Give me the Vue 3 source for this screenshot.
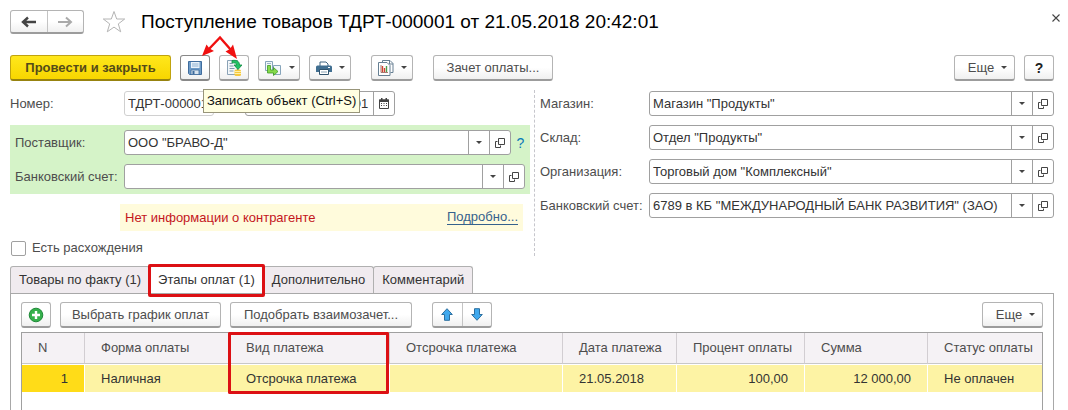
<template>
    <div class="page">
        <div class="title-row">
            <div class="nav">
                <button type="button" aria-label="Назад">
                    <svg width="16" height="12" viewBox="0 0 16 12"><path d="M7 1.500 2 6l5 4.500M2.500 6H15" fill="none" stroke="#444" stroke-width="2.400"/></svg>
                </button>
                <button type="button" aria-label="Вперед">
                    <svg width="16" height="12" viewBox="0 0 16 12"><path d="M9 1.500 14 6 9 10.500M13.500 6H1" fill="none" stroke="#aaa" stroke-width="2"/></svg>
                </button>
            </div>
            <button type="button" class="plain star" aria-label="В избранное">
                <svg width="24" height="24" viewBox="0 0 24 24"><path d="M12 1.500 14.700 9h8L16.300 13.900l2.400 7.900L12 17.100l-6.700 4.700 2.400-7.900L1.300 9h8z" fill="#fff" stroke="#b4b4b4"/></svg>
            </button>
            <h1>Поступление товаров ТДРТ-000001 от 21.05.2018 20:42:01</h1>
            <button type="button" class="plain close" aria-label="Закрыть">
                <svg width="8" height="8" viewBox="0 0 8 8"><path d="M.5.5l7 7M7.500.5l-7 7" stroke="#444" stroke-width="1.100"/></svg>
            </button>
        </div>

        <div class="toolbar main-bar">
            <button type="button" class="btn primary">Провести и закрыть</button>
            <div class="save-wrap">
                <button type="button" class="btn icon active" aria-label="Записать" aria-describedby="save-tip">
                    <svg width="16" height="16" viewBox="0 0 16 16">
                        <path d="M1.500 1.500h13v13h-12l-1-1z" fill="#6d9bc8" stroke="#3f6c9d"/>
                        <path d="M4 2h8.500v6H4z" fill="#e9f2fa"/>
                        <path d="M5 4h6.500M5 6h6.500" stroke="#8fb2d3"/>
                        <path d="M4 10h8v4.500H4z" fill="#d9e4ee" stroke="#3f6c9d" stroke-width=".8"/>
                        <path d="M5.500 11h2v3h-2z" fill="#3f6c9d"/>
                    </svg>
                </button>
                <svg class="arrows" width="44" height="26" viewBox="0 0 44 26">
                    <path d="M10 15 22 2.500 33 15" fill="none" stroke="#f01010" stroke-width="2.400"/>
                    <path d="M4 21 8.500 9.500l3 4 4.500 2.500zM39 24l-11.500-7.500 4.500-2.500 3-4.500z" fill="#f01010"/>
                </svg>
                <div class="tooltip" id="save-tip" role="tooltip">Записать объект (Ctrl+S)</div>
            </div>
            <button type="button" class="btn icon" aria-label="Провести">
                <svg width="16" height="18" viewBox="0 0 16 18">
                    <path d="M1.500 1.500h10v14h-10z" fill="#f3f7fa" stroke="#8aa2b6"/>
                    <path d="M3.500 4.500h3M3.500 7h4M3.500 9.500h5M3.500 12h4" stroke="#7d98ad"/>
                    <rect x="8.500" y="10.500" width="6.500" height="6.500" rx="1.500" fill="#f6c83c"/>
                    <path d="M8.500 12.500H15M8.500 14.500H15" stroke="#fff0a8"/>
                    <path d="M6 1.500c5-.8 7.500 1 7.500 4.500H16l-4 4.500L8 6h2.500c0-1.800-1.500-2.500-4.500-2z" fill="#20c264" stroke="#128a43" stroke-width=".8"/>
                </svg>
            </button>
            <button type="button" class="btn menu" aria-label="Создать на основании">
                <svg width="18" height="16" viewBox="0 0 18 16">
                    <path d="M1.500 1.500h7v9h-7zM9.500 5.500h7v9h-7z" fill="#f2f7fa" stroke="#87a5bb"/>
                    <path d="M3 3.500h4" stroke="#9ab5c8"/>
                    <path d="M3.500 5.500h3v4.500h3V7.500l4.500 4-4.500 4V13h-6z" fill="#86d94b" stroke="#3c9a25" stroke-width=".8"/>
                </svg>
                <i class="caret"></i>
            </button>
            <button type="button" class="btn menu" aria-label="Печать">
                <svg width="16" height="14" viewBox="0 0 16 14">
                    <path d="M4 5V1h6l2 2v2" fill="#fff" stroke="#416480"/>
                    <path d="M1.500 4.500h13Q16 4.500 16 6v5h-3V9H3v2H0V6q0-1.500 1.500-1.500z" fill="#416f91"/>
                    <path d="M3.500 8.500h9v5h-9z" fill="#fff" stroke="#31536d"/>
                    <path d="M5 11h6" stroke="#8ba3b4"/><path d="M12 6.500h2" stroke="#fff"/>
                </svg>
                <i class="caret"></i>
            </button>
            <button type="button" class="btn menu reports" aria-label="Отчеты">
                <svg width="16" height="16" viewBox="0 0 16 16">
                    <path d="M4.500 2.500v-2h7.500l3 3v9h-2.500" fill="#fff" stroke="#667f92"/>
                    <path d="M11.500.5v3.500H15" fill="none" stroke="#667f92"/>
                    <path d="M.5 2.500h8.500l3 3v10H.5z" fill="#fff" stroke="#667f92"/>
                    <path d="M3 5v7.500h7" fill="none" stroke="#a57a72"/>
                    <path d="M4.500 6v6" stroke="#d1422f" stroke-width="1.400"/>
                    <path d="M6.500 8v4" stroke="#d1422f" stroke-width="1.400"/>
                    <path d="M8.500 6v6" stroke="#4b9c49" stroke-width="1.400"/>
                </svg>
                <i class="caret"></i>
            </button>
            <button type="button" class="btn offset">Зачет оплаты...</button>
            <button type="button" class="btn more">Еще <i class="caret"></i></button>
            <button type="button" class="btn icon help">?</button>
        </div>

        <div class="form">
            <div class="left">
                <div class="row number-row">
                    <label for="number">Номер:</label>
                    <div class="field readonly"><input id="number" v-model="doc.number" readonly></div>
                    <div class="field date">
                        <input v-model="doc.date" aria-label="Дата">
                        <button type="button" aria-label="Календарь">
                            <svg width="10" height="11" viewBox="0 0 10 11">
                                <path d="M.5 2h9v8.500h-9z" fill="#fff" stroke="#444"/>
                                <path d="M0 1.500h10v2.500H0zM2 0h1.500v2H2zM6.500 0H8v2H6.500z" fill="#444"/>
                                <path d="M2 5.500h6M2 7.500h6" stroke="#444" stroke-dasharray="1 1.500"/>
                            </svg>
                        </button>
                    </div>
                </div>

                <div class="supplier">
                    <div class="row">
                        <label for="supplier">Поставщик:</label>
                        <div class="field">
                            <input id="supplier" v-model="doc.supplier">
                            <button type="button" aria-label="Выбрать"><i class="caret"></i></button>
                            <button type="button" aria-label="Открыть">
                                <svg width="10" height="10" viewBox="0 0 10 10"><path d="M3.500.5h6v6h-6zM2.500 3.500h-2v6h5v-2" fill="none" stroke="#444"/></svg>
                            </button>
                        </div>
                        <button type="button" class="plain hint">?</button>
                    </div>
                    <div class="row">
                        <label for="account">Банковский счет:</label>
                        <div class="field">
                            <input id="account" v-model="doc.account">
                            <button type="button" aria-label="Выбрать"><i class="caret"></i></button>
                            <button type="button" aria-label="Открыть">
                                <svg width="10" height="10" viewBox="0 0 10 10"><path d="M3.500.5h6v6h-6zM2.500 3.500h-2v6h5v-2" fill="none" stroke="#444"/></svg>
                            </button>
                        </div>
                    </div>
                </div>

                <div class="warning">
                    <span>Нет информации о контрагенте</span>
                    <a href="#">Подробно...</a>
                </div>

                <label class="check"><input type="checkbox" v-model="doc.diff">Есть расхождения</label>
            </div>

            <div class="right">
                <div class="row" v-for="item in details" :key="item.id">
                    <label :for="item.id">{{ item.label }}</label>
                    <div class="field">
                        <input :id="item.id" v-model="item.value">
                        <button type="button" aria-label="Выбрать"><i class="caret"></i></button>
                        <button type="button" aria-label="Открыть">
                            <svg width="10" height="10" viewBox="0 0 10 10"><path d="M3.500.5h6v6h-6zM2.500 3.500h-2v6h5v-2" fill="none" stroke="#444"/></svg>
                        </button>
                    </div>
                </div>
            </div>
        </div>

        <div class="tabs" role="tablist">
            <button
                v-for="(tab, index) in tabs"
                :key="tab"
                type="button"
                role="tab"
                :aria-selected="index === current"
                :class="{ current: index === current }"
                @click="current = index"
            >{{ tab }}</button>
        </div>

        <div class="panel">
            <div class="toolbar">
                <button type="button" class="btn icon" aria-label="Добавить">
                    <svg width="16" height="16" viewBox="0 0 16 16">
                        <circle cx="8" cy="8" r="6.800" fill="#35b04c" stroke="#1f8a38"/>
                        <path d="M8 4v8M4 8h8" stroke="#fff" stroke-width="2.400"/>
                    </svg>
                </button>
                <button type="button" class="btn schedule">Выбрать график оплат</button>
                <button type="button" class="btn netting">Подобрать взаимозачет...</button>
                <div class="nav move">
                    <button type="button" aria-label="Вверх">
                        <svg width="12" height="13" viewBox="0 0 12 13"><path d="M6 .7 11.300 6.500H8.500v5.800h-5V6.500H.7z" fill="#3fa9ee" stroke="#2c6f9f"/></svg>
                    </button>
                    <button type="button" aria-label="Вниз">
                        <svg width="12" height="13" viewBox="0 0 12 13"><path d="M6 12.300 11.300 6.500H8.500V.7h-5v5.800H.7z" fill="#3fa9ee" stroke="#2c6f9f"/></svg>
                    </button>
                </div>
                <button type="button" class="btn more">Еще <i class="caret"></i></button>
            </div>

            <table>
                <colgroup>
                    <col class="c-n"><col class="c-form"><col class="c-kind"><col class="c-delay">
                    <col class="c-date"><col class="c-percent"><col class="c-sum"><col>
                </colgroup>
                <thead>
                    <tr>
                        <th v-for="(name, index) in columns" :key="name" :class="{ marked: index === 2 }">{{ name }}</th>
                    </tr>
                </thead>
                <tbody>
                    <tr v-for="stage in stages" :key="stage.n">
                        <td class="num first">{{ stage.n }}</td>
                        <td>{{ stage.form }}</td>
                        <td class="marked">{{ stage.kind }}</td>
                        <td>{{ stage.delay }}</td>
                        <td>{{ stage.date }}</td>
                        <td class="num">{{ stage.percent }}</td>
                        <td class="num">{{ stage.sum }}</td>
                        <td>{{ stage.status }}</td>
                    </tr>
                </tbody>
            </table>
        </div>
    </div>
</template>

<script setup>
import { ref, reactive } from "vue"

// шапка документа
const doc = reactive({
    number: "ТДРТ-000001",
    date: "21.05.2018 20:42:01",
    supplier: 'ООО "БРАВО-Д"',
    account: "",
    diff: false
})

const details = ref([
    { id: "shop", label: "Магазин:", value: 'Магазин "Продукты"' },
    { id: "store", label: "Склад:", value: 'Отдел "Продукты"' },
    { id: "org", label: "Организация:", value: 'Торговый дом "Комплексный"' },
    { id: "org-account", label: "Банковский счет:", value: '6789 в КБ "МЕЖДУНАРОДНЫЙ БАНК РАЗВИТИЯ" (ЗАО)' }
])

// вкладки
const tabs = ["Товары по факту (1)", "Этапы оплат (1)", "Дополнительно", "Комментарий"]
const current = ref(1)

// таблица этапов оплат
const columns = ["N", "Форма оплаты", "Вид платежа", "Отсрочка платежа", "Дата платежа", "Процент оплаты", "Сумма", "Статус оплаты"]
const stages = ref([
    { n: 1, form: "Наличная", kind: "Отсрочка платежа", delay: "", date: "21.05.2018", percent: "100,00", sum: "12 000,00", status: "Не оплачен" }
])
</script>

<style>
body{
    margin: 0;
    background: #fff;
}
</style>

<style scoped>
*{
    box-sizing: border-box;
}
.page{
    display: flex;
    flex-direction: column;
    min-height: 100vh;
    padding: 9px 14px 0 10px;
    font-family: "Liberation Sans", Arial, sans-serif;
    font-size: 13px;
    line-height: 16px;
    color: #4d4d4d;
}
button, input{
    font: inherit;
    color: inherit;
}
button{
    padding: 0;
    cursor: pointer;
}
svg{
    display: block;
    flex: none;
}
.plain{
    border: 0;
    background: none;
}

/* заголовок */
.title-row{
    display: flex;
    align-items: center;
    height: 26px;
}
.nav{
    display: flex;
    width: 74px;
    height: 24px;
    border: 1px solid #b4b4b4;
    border-bottom: 2px solid #9c9c9c;
    border-radius: 3px;
    background: linear-gradient(#fff 50%, #f0f0f0);
}
.nav button{
    display: flex;
    flex: 1;
    align-items: center;
    justify-content: center;
    border: 0;
    background: none;
}
.nav button + button{
    border-left: 1px solid #c4c4c4;
}
.star{
    margin: 0 15px 0 18px;
}
h1{
    flex: 1;
    margin: 0;
    font-size: 19px;
    font-weight: normal;
    line-height: 24px;
    color: #000;
}
.close{
    align-self: flex-start;
    padding: 5px 0;
    margin-right: -6px;
}

/* кнопки */
.toolbar{
    display: flex;
    gap: 9px;
}
.main-bar{
    margin-top: 20px;
}
.btn{
    display: flex;
    align-items: center;
    justify-content: center;
    height: 26px;
    padding: 0 14px;
    border: 1px solid #b4b4b4;
    border-bottom: 2px solid #9c9c9c;
    border-radius: 3px;
    background: linear-gradient(#fff 50%, #f0f0f0);
    white-space: nowrap;
}
.primary{
    width: 161px;
    border-color: #c0a30e;
    border-bottom-color: #97830f;
    background: linear-gradient(#ffe71c, #f8d600);
    font-weight: bold;
    color: #544b19;
}
.icon{
    width: 30px;
    padding: 0;
}
.active{
    border-color: #888;
}
.menu{
    gap: 7px;
    width: 42px;
    padding: 0;
}
.reports{
    margin-left: 11px;
}
.offset{
    width: 120px;
    margin-left: 11px;
}
.more{
    gap: 7px;
    width: 61px;
    padding: 0 0 0 6px;
    margin-left: auto;
}
.help{
    font-size: 14px;
    font-weight: bold;
    color: #222;
}
.caret{
    border: 3px solid transparent;
    border-top-color: #444;
    border-bottom: 0;
}
.save-wrap{
    position: relative;
}
.arrows{
    position: absolute;
    left: 18px;
    top: -20px;
    z-index: 2;
}
.tooltip{
    position: absolute;
    left: 23px;
    top: 34px;
    z-index: 1;
    padding: 3px;
    border: 1px solid #98957a;
    background: #ffffe1;
    color: #111;
    white-space: nowrap;
}

/* реквизиты */
.form{
    display: grid;
    grid-template-columns: 1fr 1fr;
    margin-top: 9px;
}
.left{
    padding: 1px 2px 0 0;
}
.right{
    display: flex;
    flex-direction: column;
    gap: 9px;
    padding: 1px 0 0 5px;
    margin-left: 2px;
    border-left: 1px dashed #c6c6cc;
}
.row{
    display: flex;
    align-items: center;
}
.row > label{
    flex: none;
    width: 109px;
}
.field{
    display: flex;
    flex: 1;
    height: 25px;
    border: 1px solid #a0a0a0;
    border-radius: 3px;
    background: #fff;
}
.field input{
    flex: 1;
    min-width: 0;
    padding: 0 3px;
    border: 0;
    outline: 0;
    background: none;
    color: #333;
}
.field button{
    display: flex;
    align-items: center;
    justify-content: center;
    width: 21px;
    border: 0;
    border-left: 1px solid #a0a0a0;
    background: none;
}
.number-row > label{
    width: 114px;
}
.number-row .readonly{
    flex: none;
    width: 90px;
    border-color: #d0d0d0;
}
.number-row .date{
    flex: none;
    width: 150px;
    margin-left: 31px;
}
.supplier{
    display: flex;
    flex-direction: column;
    gap: 9px;
    padding: 5px;
    margin-top: 9px;
    background: #d5f3c8;
}
.hint{
    width: 14px;
    padding-left: 5px;
    font-size: 14px;
    color: #0878b8;
}
.warning{
    display: flex;
    align-items: center;
    justify-content: space-between;
    height: 27px;
    padding: 0 5px;
    margin: 10px 7px 0 110px;
    background: #fffbdc;
    color: #c4161c;
}
.warning a{
    border-bottom: 1px solid #35618c;
    color: #35618c;
    line-height: 14px;
    text-decoration: none;
}
.check{
    display: flex;
    align-items: center;
    gap: 6px;
    width: max-content;
    margin: 9px 0 0 1px;
}
.check input{
    appearance: none;
    width: 15px;
    height: 15px;
    margin: 0;
    border: 1px solid #a0a0a0;
    border-radius: 2px;
    background: #fff;
}
.check input:checked{
    background: #4d9a3a;
}

/* вкладки */
.tabs{
    display: flex;
    margin-top: 10px;
}
.tabs button{
    position: relative;
    height: 27px;
    padding: 0 8px;
    border: 1px solid #b0b0b0;
    border-bottom: 0;
    border-radius: 3px 3px 0 0;
    background: #f0ebef;
    color: #333;
}
.tabs button + button{
    margin-left: -1px;
}
.tabs .current{
    background: #fff;
}
.tabs .current::after{
    content: "";
    position: absolute;
    inset: -3px -2px -4px;
    border: 3px solid #dc1014;
    border-radius: 2px;
    z-index: 1;
}
.panel{
    flex: 1;
    display: flex;
    flex-direction: column;
    padding: 8px 10px 0;
    border: 1px solid #a8a8a8;
    border-bottom: 0;
}
.schedule{
    width: 161px;
}
.netting{
    width: 182px;
}
.move{
    width: 60px;
    height: 26px;
    margin-left: 11px;
}

/* таблица */
table{
    width: 100%;
    margin-top: 4px;
    border: 1px solid #a0a0a0;
    border-bottom: 0;
    border-spacing: 0;
    table-layout: fixed;
}
.panel::after{
    content: "";
    flex: 1;
    border: 1px solid #a0a0a0;
    border-width: 0 1px;
}
.c-n{ width: 63px; }
.c-form{ width: 145px; }
.c-kind{ width: 160px; }
.c-delay{ width: 173px; }
.c-date{ width: 114px; }
.c-percent{ width: 128px; }
.c-sum{ width: 123px; }
th, td{
    position: relative;
    padding: 0 0 0 16px;
    white-space: nowrap;
    text-align: left;
}
th{
    height: 31px;
    border-right: 1px solid #d2ced2;
    border-bottom: 1px solid #c8c8c8;
    background: #f5f2f5;
    font-weight: normal;
}
td{
    height: 29px;
    border: 1px solid #fff;
    border-width: 1px 1px 1px 0;
    background: #fdf3a4;
    color: #333;
}
th:last-child, td:last-child{
    border-right: 0;
}
.num{
    padding: 0 16px 0 0;
    text-align: right;
}
.first{
    background: #ffdc18;
}
.marked::after{
    content: "";
    position: absolute;
    inset: -1px 0 -2px -2px;
    border: 3px solid #dc1014;
    z-index: 1;
}
th.marked::after{
    border-bottom: 0;
    border-radius: 2px 2px 0 0;
}
td.marked::after{
    border-top: 0;
    border-radius: 0 0 2px 2px;
}
</style>
